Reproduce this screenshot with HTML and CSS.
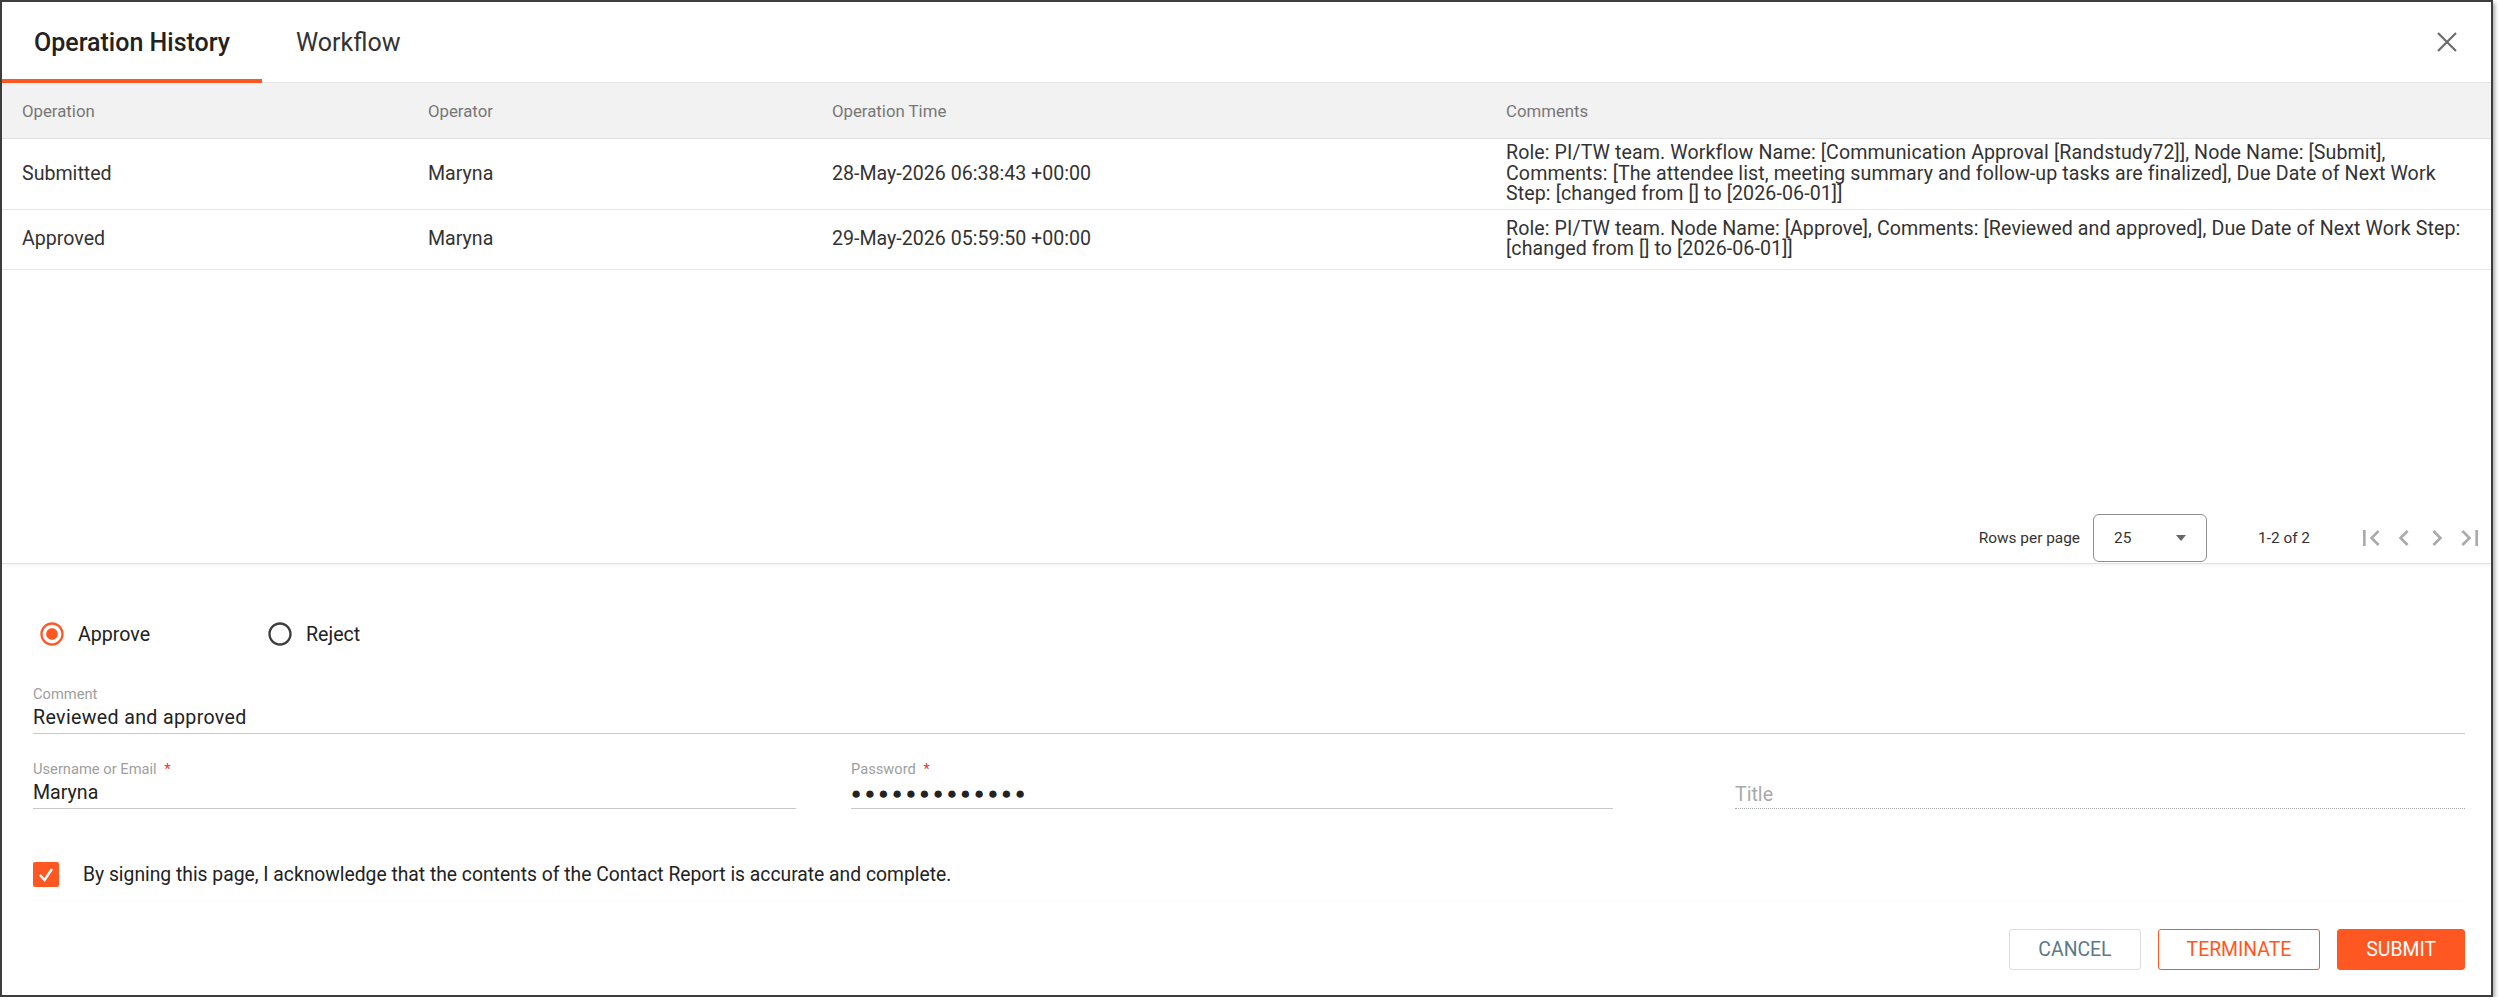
FILE: index.html
```html
<!DOCTYPE html>
<html lang="en">
<head>
    <meta charset="UTF-8">
    <meta name="viewport" content="width=device-width, initial-scale=1.0">
    <title>Operation History</title>
    <link rel="stylesheet" href="styles.css">
</head>
<body>
    <div class="dialog">
        <div class="tabbar">
            <div class="tab active">Operation History</div>
            <div class="tab">Workflow</div>
            <svg class="close" width="22" height="22" viewBox="0 0 22 22">
                <path d="M2 2L20 20M20 2L2 20" stroke="#6b6b6b" stroke-width="2.2" fill="none"/>
            </svg>
        </div>

        <div class="grid">
            <table class="history">
                <colgroup>
                    <col style="width:406px">
                    <col style="width:404px">
                    <col style="width:674px">
                    <col>
                </colgroup>
                <thead>
                    <tr>
                        <th>Operation</th>
                        <th>Operator</th>
                        <th>Operation Time</th>
                        <th>Comments</th>
                    </tr>
                </thead>
                <tbody>
                    <tr>
                        <td>Submitted</td>
                        <td>Maryna</td>
                        <td>28-May-2026 06:38:43 +00:00</td>
                        <td class="comment">Role: PI/TW team. Workflow Name: [Communication Approval [Randstudy72]], Node Name: [Submit], Comments: [The attendee list, meeting summary and follow-up tasks are finalized], Due Date of Next Work Step: [changed from [] to [2026-06-01]]</td>
                    </tr>
                    <tr>
                        <td>Approved</td>
                        <td>Maryna</td>
                        <td>29-May-2026 05:59:50 +00:00</td>
                        <td class="comment">Role: PI/TW team. Node Name: [Approve], Comments: [Reviewed and approved], Due Date of Next Work Step: [changed from [] to [2026-06-01]]</td>
                    </tr>
                </tbody>
            </table>

            <div class="pager">
                <span class="pager-label">Rows per page</span>
                <div class="pager-select">
                    <span>25</span>
                    <span class="caret"></span>
                </div>
                <span class="pager-count">1-2 of 2</span>
                <div class="pager-nav">
                    <svg width="32" height="32" viewBox="0 0 24 24"><path d="M18.41 16.59L13.82 12l4.59-4.59L17 6l-6 6 6 6zM6 6h2v12H6z"/></svg>
                    <svg width="32" height="32" viewBox="0 0 24 24"><path d="M15.41 7.41L14 6l-6 6 6 6 1.41-1.41L10.83 12z"/></svg>
                    <svg width="32" height="32" viewBox="0 0 24 24"><path d="M10 6L8.59 7.41 13.17 12l-4.58 4.59L10 18l6-6z"/></svg>
                    <svg width="32" height="32" viewBox="0 0 24 24"><path d="M5.59 7.41L10.18 12l-4.59 4.59L7 18l6-6-6-6zM16 6h2v12h-2z"/></svg>
                </div>
            </div>
        </div>

        <div class="sign-form">
            <div class="radio-row">
                <label class="radio-opt">
                    <svg width="28" height="28" viewBox="0 0 24 24" class="on">
                        <path d="M12 2C6.48 2 2 6.480 2 12s4.48 10 10 10 10-4.48 10-10S17.52 2 12 2zm0 18c-4.42 0-8-3.58-8-8s3.58-8 8-8 8 3.58 8 8-3.58 8-8 8z"/>
                        <path d="M12 7c-2.76 0-5 2.24-5 5s2.24 5 5 5 5-2.24 5-5-2.24-5-5-5z"/>
                    </svg>
                    Approve
                </label>
                <label class="radio-opt">
                    <svg width="28" height="28" viewBox="0 0 24 24" class="off">
                        <path d="M12 2C6.48 2 2 6.48 2 12s4.48 10 10 10 10-4.48 10-10S17.52 2 12 2zm0 18c-4.42 0-8-3.58-8-8s3.58-8 8-8 8 3.58 8 8-3.58 8-8 8z"/>
                    </svg>
                    Reject
                </label>
            </div>

            <div class="field comment-field">
                <div class="field-label">Comment</div>
                <div class="field-value spaced">Reviewed and approved</div>
            </div>

            <div class="field-row">
                <div class="field user">
                    <div class="field-label">Username or Email <span class="req">*</span></div>
                    <div class="field-value">Maryna</div>
                </div>
                <div class="field pass">
                    <div class="field-label">Password <span class="req">*</span></div>
                    <div class="field-value dots">&#9679;&#9679;&#9679;&#9679;&#9679;&#9679;&#9679;&#9679;&#9679;&#9679;&#9679;&#9679;&#9679;</div>
                </div>
                <div class="field title">
                    <div class="field-label">&nbsp;</div>
                    <div class="field-value placeholder">Title</div>
                </div>
            </div>

            <div class="ack">
                <span class="check">
                    <svg width="26" height="25" viewBox="0 0 26 25"><path d="M7 13l4.5 5L19 7" stroke="#fff" stroke-width="2.4" fill="none"/></svg>
                </span>
                By signing this page, I acknowledge that the contents of the Contact Report is accurate and complete.
            </div>

            <div class="actions">
                <button class="btn cancel">Cancel</button>
                <button class="btn terminate">Terminate</button>
                <button class="btn submit">Submit</button>
            </div>
        </div>
    </div>
</body>
</html>
```

FILE: styles.css
```css
body {
    margin: 0;
    background: #fff;
    font-family: Roboto, "Liberation Sans", sans-serif;
    color: #222;
}
.dialog {
    width: 2493px;
    height: 997px;
    box-sizing: border-box;
    border: 2px solid #3d3d3d;
    box-shadow: 2px 3px 4px rgba(0,0,0,0.35);
    display: flex;
    flex-direction: column;
    background: #fff;
}

/* tabs */
.tabbar {
    display: flex;
    height: 80px;
    border-bottom: 1px solid #e4e4e4;
}
.tab {
    position: relative;
    display: flex;
    align-items: center;
    padding: 0 32px;
    font-size: 25px;
    color: #333;
}
.tab + .tab {
    padding-left: 34px;
}
.tab.active {
    color: #222;
    font-weight: 500;
}
.tab.active::after {
    content: "";
    position: absolute;
    left: 0;
    right: 0;
    bottom: -1px;
    height: 4px;
    background: #ff5722;
}
.close {
    margin-left: auto;
    margin-right: 33px;
    align-self: center;
}

/* grid */
.grid {
    height: 480px;
    display: flex;
    flex-direction: column;
    border-bottom: 1px solid #e2e2e2;
    box-shadow: 0 2px 3px rgba(0,0,0,0.04);
}
.history {
    width: 100%;
    table-layout: fixed;
    border-collapse: collapse;
}
.history th {
    height: 55px;
    background: #f2f2f2;
    color: #777;
    font-size: 16.8px;
    font-weight: 400;
    text-align: left;
    padding: 0 14px 0 20px;
    border-bottom: 1px solid #e0e0e0;
}
.history td {
    height: 60px;
    box-sizing: border-box;
    padding: 4px 14px 4px 20px;
    font-size: 19.6px;
    line-height: 20.5px;
    color: #333;
    border-bottom: 1px solid #e6e6e6;
    vertical-align: middle;
}
.history td.comment {
    letter-spacing: 0.1px;
}

/* pagination */
.pager {
    margin-top: auto;
    height: 51px;
    display: flex;
    align-items: center;
    justify-content: flex-end;
    padding-right: 5px;
    font-size: 15.4px;
    color: #333;
}
.pager-select {
    margin-left: 13px;
    width: 114px;
    height: 48px;
    box-sizing: border-box;
    border: 1.5px solid #8f8f8f;
    border-radius: 6px;
    display: flex;
    align-items: center;
    justify-content: space-between;
    padding: 0 20px 0 20px;
}
.caret {
    width: 0;
    height: 0;
    border-left: 5px solid transparent;
    border-right: 5px solid transparent;
    border-top: 6px solid #666;
}
.pager-count {
    margin-left: 51px;
}
.pager-nav {
    display: flex;
    gap: 1px;
    margin-left: 45px;
    fill: #aaa;
}

/* form */
.sign-form {
    padding: 50px 26px 0 31px;
}
.radio-row {
    height: 40px;
    display: flex;
    align-items: center;
    padding-left: 5px;
}
.radio-opt {
    width: 228px;
    display: flex;
    align-items: center;
    gap: 12px;
    font-size: 19.6px;
    color: #222;
}
.radio-opt .on {
    fill: #ff5722;
}
.radio-opt .off {
    fill: #3c3c3c;
}
.field {
    display: flex;
    flex-direction: column;
}
.comment-field {
    margin-top: 31px;
}
.field-label {
    font-size: 14.7px;
    line-height: 18px;
    color: #9e9e9e;
    margin-bottom: 3px;
}
.req {
    color: #e53935;
    margin-left: 4px;
}
.field-value {
    font-size: 19.6px;
    line-height: 24px;
    padding-bottom: 3px;
    border-bottom: 1.5px solid #c8c8c8;
    color: #222;
}
.field-value.spaced {
    letter-spacing: 0.35px;
}
.field-value.dots {
    font-size: 17px;
    letter-spacing: 3.4px;
}
.field-value.placeholder {
    color: #aaa;
    padding-top: 2px;
    padding-bottom: 1px;
    border-bottom: 1.5px dotted #a8a8a8;
}
.field-row {
    display: flex;
    margin-top: 26px;
}
.field.user {
    width: 763px;
}
.field.pass {
    width: 762px;
    margin-left: 55px;
}
.field.title {
    flex: 1;
    margin-left: 122px;
}
.ack {
    margin-top: 53px;
    display: flex;
    align-items: center;
    gap: 24px;
    padding-bottom: 13px;
    border-bottom: 1px solid #fafafa;
    font-size: 19.3px;
    color: #222;
}
.check {
    width: 26px;
    height: 25px;
    border-radius: 2px;
    background: #ff5722;
    display: flex;
}
.actions {
    margin-top: 28px;
    display: flex;
    justify-content: flex-end;
    gap: 17px;
}
.btn {
    height: 41px;
    padding: 0 28px;
    font-family: Roboto, "Liberation Sans", sans-serif;
    font-size: 19.4px;
    text-transform: uppercase;
    border-radius: 3px;
    background: #fff;
    cursor: pointer;
}
.btn.cancel {
    border: 1px solid #dcdcdc;
    color: #5b7a89;
}
.btn.terminate {
    border: 1.5px solid #ff5722;
    color: #ff5722;
}
.btn.submit {
    border: 1.5px solid #ff5722;
    background: #ff5722;
    color: #fff;
}
```
